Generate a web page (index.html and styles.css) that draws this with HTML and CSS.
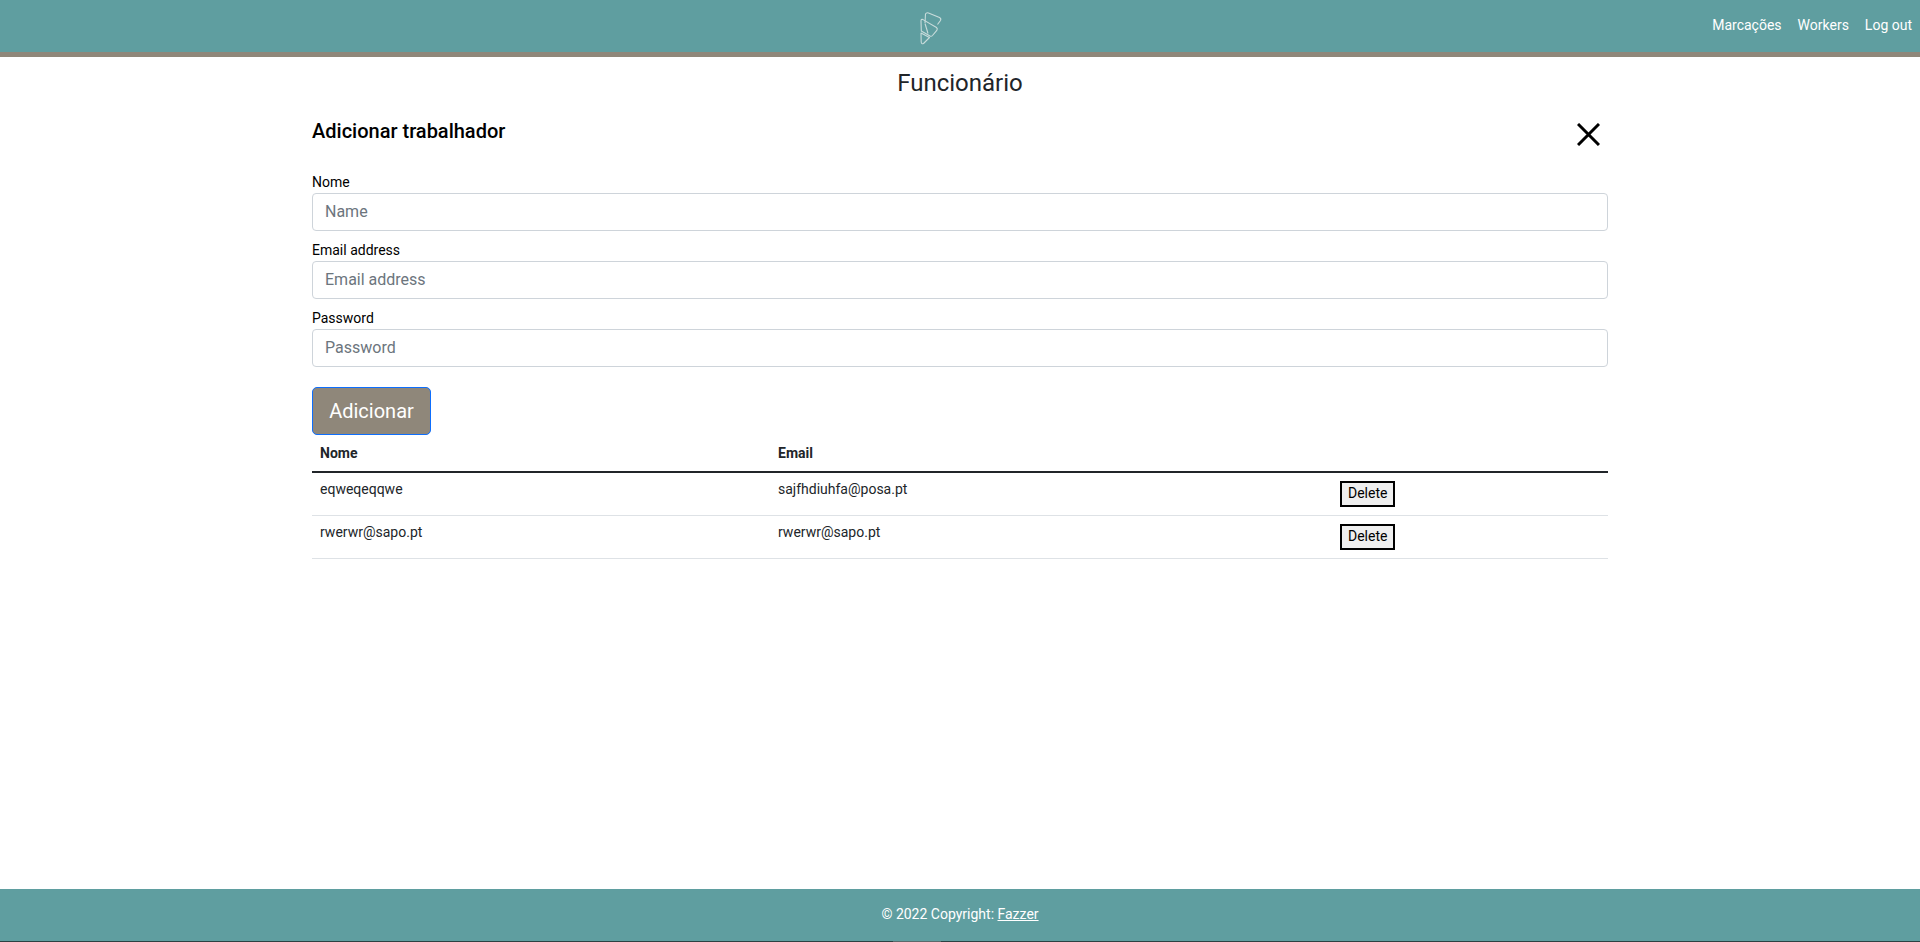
FILE: index.html
```html
<!DOCTYPE html>
<html lang="en">
<head>
    <meta charset="UTF-8">
    <meta name="viewport" content="width=device-width, initial-scale=1.0">
    <title>Funcionário</title>
    <link rel="stylesheet" href="styles.css">
</head>
<body>

    <header class="topbar">
        <div class="topbar-logo">
            <svg width="26" height="34" viewBox="0 0 26 34" fill="none" stroke="#c9dcdb" stroke-width="1.1" stroke-linejoin="round">
                <path d="M8 12 L8.5 3 Q9.5 1.2 11.5 2 L22.5 6.5 Q24.5 7.5 23.5 9.5 L20.5 13.5"/>
                <path d="M4 10 Q4 7.8 6 8.6 L19.5 16.5 Q21 17.8 19.8 19.3 L15.5 24.5 Q14.5 25.6 13 25 L4.3 20 Z"/>
                <path d="M8 12.5 L11 22.5"/>
                <path d="M4 22 L12.5 26.5 L6.5 32.5 Q4.5 33.5 4.2 31 Z"/>
            </svg>
        </div>
        <nav class="topbar-links">
            <a href="#">Marcações</a>
            <a href="#">Workers</a>
            <a href="#">Log out</a>
        </nav>
    </header>

    <main class="page">
        <h1 class="page-title">Funcionário</h1>

        <div class="form-head">
            <h2>Adicionar trabalhador</h2>
            <button type="button" class="close-btn" aria-label="Close">
                <svg width="23" height="23" viewBox="0 0 23 23" fill="none" stroke="#000" stroke-width="3">
                    <path d="M1 1 L22 22 M22 1 L1 22"/>
                </svg>
            </button>
        </div>

        <form class="worker-form">
            <label for="name">Nome</label>
            <input type="text" id="name" placeholder="Name">
            <label for="email">Email address</label>
            <input type="email" id="email" placeholder="Email address">
            <label for="password">Password</label>
            <input type="password" id="password" placeholder="Password">
            <button type="submit" class="add-btn">Adicionar</button>
        </form>

        <table class="worker-table">
            <thead>
                <tr>
                    <th class="col-name">Nome</th>
                    <th class="col-email">Email</th>
                    <th></th>
                </tr>
            </thead>
            <tbody>
                <tr>
                    <td>eqweqeqqwe</td>
                    <td>sajfhdiuhfa@posa.pt</td>
                    <td><button type="button" class="delete-btn">Delete</button></td>
                </tr>
                <tr>
                    <td>rwerwr@sapo.pt</td>
                    <td>rwerwr@sapo.pt</td>
                    <td><button type="button" class="delete-btn">Delete</button></td>
                </tr>
            </tbody>
        </table>
    </main>

    <footer class="footer">
        © 2022 Copyright:&nbsp;<a href="#">Fazzer</a>
    </footer>
    <div class="screen-edge"><span></span></div>

</body>
</html>
```

FILE: styles.css
```css
* {
    box-sizing: border-box;
}
body {
    margin: 0;
    height: 942px;
    display: flex;
    flex-direction: column;
    font-family: Roboto, "Liberation Sans", sans-serif;
    font-size: 16px;
    color: #212529;
    background-color: #fff;
    overflow: hidden;
}
.topbar {
    height: 57px;
    flex: none;
    display: flex;
    justify-content: flex-end;
    position: relative;
    background-color: #5f9ea0;
    border-bottom: 5px solid #8f877a;
}
.topbar-logo {
    position: absolute;
    left: 917px;
    top: 11px;
    line-height: 0;
}
.topbar-links {
    display: flex;
    align-items: center;
    gap: 16px;
    padding-right: 8px;
    padding-bottom: 2px;
}
.topbar-links a {
    color: #fff;
    text-decoration: none;
    font-size: 14px;
}
.page {
    flex: 1;
    width: 1296px;
    margin: 0 auto;
}
.page-title {
    margin: 12px 0 0;
    font-size: 24px;
    font-weight: 400;
    line-height: 29px;
    text-align: center;
}
.form-head {
    display: flex;
    justify-content: space-between;
    margin-top: 13px;
    height: 61px;
    color: #000;
}
.form-head h2 {
    margin: 8px 0 0;
    font-size: 20px;
    font-weight: 500;
    line-height: 24px;
}
.close-btn {
    margin: 12px 8px 0 0;
    padding: 0;
    width: 23px;
    height: 23px;
    line-height: 0;
    border: none;
    background: none;
}
.worker-form label {
    display: block;
    margin-top: 9px;
    font-size: 14px;
    line-height: 21px;
    color: #000;
}
.worker-form label:first-child {
    margin-top: 0;
}
.worker-form input {
    display: block;
    width: 100%;
    height: 38px;
    padding: 5px 12px 7px;
    font-family: inherit;
    font-size: 16px;
    color: #212529;
    border: 1px solid #ced4da;
    border-radius: 4px;
}
.worker-form input::placeholder {
    color: #6c757d;
}
.add-btn {
    display: block;
    margin-top: 20px;
    width: 119px;
    height: 48px;
    font-family: inherit;
    font-size: 20px;
    color: #fff;
    background-color: #8f877a;
    border: 1px solid #0d6efd;
    border-radius: 5px;
}
.worker-table {
    width: 100%;
    border-collapse: collapse;
    font-size: 14px;
}
.worker-table th {
    height: 37px;
    padding: 8px;
    text-align: left;
    font-weight: 700;
    border-bottom: 2px solid #212529;
}
.worker-table td {
    height: 43px;
    padding: 8px;
    vertical-align: top;
    border-bottom: 1px solid #dee2e6;
}
.col-name {
    width: 458px;
}
.col-email {
    width: 562px;
}
.delete-btn {
    display: block;
    height: 26px;
    padding: 0 6px 2px;
    font-family: inherit;
    font-size: 14px;
    color: #000;
    background-color: #efefef;
    border: 2px solid #000;
}
.footer {
    height: 52px;
    flex: none;
    display: flex;
    justify-content: center;
    align-items: center;
    padding-bottom: 2px;
    font-size: 14px;
    color: #fff;
    background-color: #5f9ea0;
}
.footer a {
    color: #fff;
}
.screen-edge {
    height: 1px;
    flex: none;
    padding-left: 893px;
    background-color: #2b4243;
}
.screen-edge span {
    display: block;
    width: 48px;
    height: 1px;
    background-color: #5a6a6b;
}
```
